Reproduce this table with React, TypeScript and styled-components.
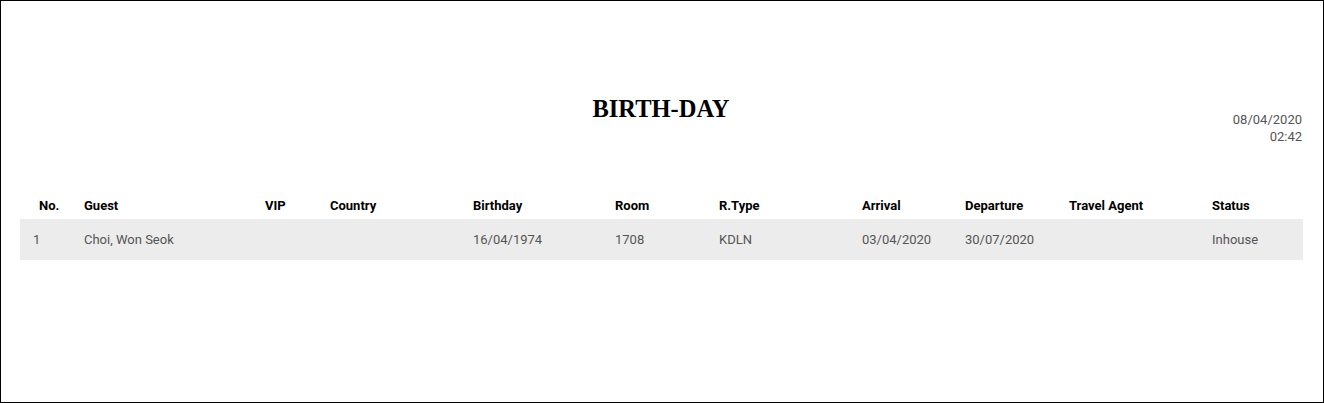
import React, {FC} from 'react';
import styled, {createGlobalStyle} from "styled-components";

type GuestType = {
    no: number
    guest: string
    vip: string
    country: string
    birthday: string
    room: string
    rType: string
    arrival: string
    departure: string
    travelAgent: string
    status: string
}

const columns = [
    {title: 'No.', width: 51},
    {title: 'Guest', width: 181},
    {title: 'VIP', width: 65},
    {title: 'Country', width: 143},
    {title: 'Birthday', width: 142},
    {title: 'Room', width: 104},
    {title: 'R.Type', width: 143},
    {title: 'Arrival', width: 103},
    {title: 'Departure', width: 104},
    {title: 'Travel Agent', width: 143},
    {title: 'Status', width: 104},
]

const guests: GuestType[] = [
    {
        no: 1,
        guest: 'Choi, Won Seok',
        vip: '',
        country: '',
        birthday: '16/04/1974',
        room: '1708',
        rType: 'KDLN',
        arrival: '03/04/2020',
        departure: '30/07/2020',
        travelAgent: '',
        status: 'Inhouse',
    },
]

const App: FC = () => {

    const rowsMap = guests.map(g => {
        return (
            <StyledRow key={g.no}>
                <StyledCell>{g.no}</StyledCell>
                <StyledCell>{g.guest}</StyledCell>
                <StyledCell>{g.vip}</StyledCell>
                <StyledCell>{g.country}</StyledCell>
                <StyledCell>{g.birthday}</StyledCell>
                <StyledCell>{g.room}</StyledCell>
                <StyledCell>{g.rType}</StyledCell>
                <StyledCell>{g.arrival}</StyledCell>
                <StyledCell>{g.departure}</StyledCell>
                <StyledCell>{g.travelAgent}</StyledCell>
                <StyledCell>{g.status}</StyledCell>
            </StyledRow>
        )
    })

    return (
        <>
            <GlobalStyle/>
            <StyledFrame>
                <StyledHeader>
                    <span/>
                    <Title>BIRTH-DAY</Title>
                    <StyledDate>
                        <div>08/04/2020</div>
                        <div>02:42</div>
                    </StyledDate>
                </StyledHeader>

                <StyledTable>
                    <colgroup>
                        {columns.map(c => <col key={c.title} style={{width: c.width}}/>)}
                    </colgroup>
                    <thead>
                    <tr>
                        {columns.map((c, i) => (
                            <StyledHeadCell key={c.title} $first={i === 0}>{c.title}</StyledHeadCell>
                        ))}
                    </tr>
                    </thead>
                    <tbody>
                    {rowsMap}
                    </tbody>
                </StyledTable>
            </StyledFrame>
        </>
    );
};

export default App;

const GlobalStyle = createGlobalStyle`
  * {
    box-sizing: border-box;
  }

  body {
    margin: 0;
    background: #fff;
    font-family: Roboto, "Noto Sans", sans-serif;
  }
`

const StyledFrame = styled.div`
  width: 1324px;
  height: 403px;
  border: 1px solid #000;
  padding: 92px 19px 0 19px;
  background: #fff;
`

const StyledHeader = styled.div`
  display: grid;
  grid-template-columns: 1fr auto 1fr;
  align-items: start;
  margin-right: 2px;
`

const Title = styled.h1`
  margin: 0;
  font-family: "Liberation Serif", serif;
  font-weight: 700;
  font-size: 24.5px;
  line-height: 32px;
  color: #000;
  text-align: center;
`

const StyledDate = styled.div`
  justify-self: end;
  margin-top: 18px;
  text-align: right;
  font-size: 13px;
  line-height: 17px;
  color: #555;
`

const StyledTable = styled.table`
  margin-top: 46px;
  width: 1283px;
  table-layout: fixed;
  border-collapse: collapse;
  font-size: 13px;
`

const StyledHeadCell = styled.th<{ $first?: boolean }>`
  height: 28px;
  padding: 0 0 0 ${p => p.$first ? '19px' : '13px'};
  text-align: left;
  vertical-align: middle;
  font-weight: 700;
  color: #000;
`

const StyledRow = styled.tr`
  background-color: #ececec;
`

const StyledCell = styled.td`
  height: 41px;
  padding: 0 0 0 13px;
  vertical-align: middle;
  color: #555;
  white-space: nowrap;
`
